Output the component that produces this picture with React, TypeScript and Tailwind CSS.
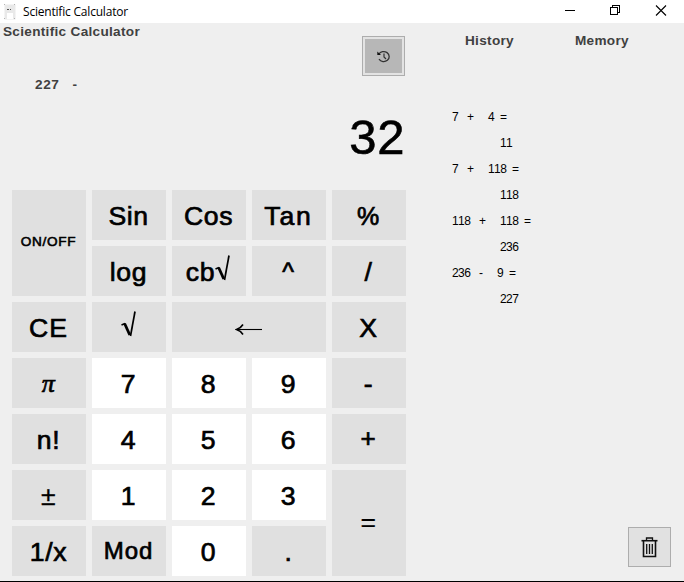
import React from "react";

type Key = { label: string; box?: string; text?: string; light?: boolean };

const keys: Key[] = [
  { label: "ON/OFF", box: "row-span-2", text: "-mt-1 text-[13.6px] tracking-[0.7px] [-webkit-text-stroke:0.6px_#000]" },
  { label: "Sin" },
  { label: "Cos" },
  { label: "Tan", text: "tracking-[1.8px]" },
  { label: "%", text: "text-[25px]" },
  { label: "log" },
  { label: "cb√" },
  { label: "^", text: "text-[25px]" },
  { label: "/" },
  { label: "CE", text: "tracking-[1px]" },
  { label: "√" },
  { label: "←", box: "col-span-2" },
  { label: "X" },
  { label: "π", text: "text-[26px] font-['Liberation_Serif',serif] italic" },
  { label: "7", light: true },
  { label: "8", light: true },
  { label: "9", light: true },
  { label: "-" },
  { label: "n!" },
  { label: "4", light: true },
  { label: "5", light: true },
  { label: "6", light: true },
  { label: "+", text: "text-[26px] -mt-1" },
  { label: "±", text: "[-webkit-text-stroke:0.3px_#000]" },
  { label: "1", light: true },
  { label: "2", light: true },
  { label: "3", light: true },
  { label: "=", box: "row-span-2", text: "-mt-1 [-webkit-text-stroke:0.2px_#000]" },
  { label: "1/x" },
  { label: "Mod", text: "text-[24px] tracking-[1px] -mt-0.5" },
  { label: "0", light: true },
  { label: "." },
];

function Face({ label, text }: Key) {
  if (label === "←")
    return (
      <svg width="28" height="12" viewBox="0 0 28 12" className="mt-0.5" fill="none" stroke="#000">
        <path d="M2 6.5H27" strokeWidth="1.1" />
        <path d="M8 1.5C6.5 4 4.5 5.5 1.5 6.5C4.5 7.5 6.5 9 8 11.5" strokeWidth="1.6" />
      </svg>
    );
  if (label === "√") return <Root />;
  if (label === "cb√")
    return (
      <span className="-ml-px flex items-center">
        <span>cb</span>
        <Root />
      </span>
    );
  return <span className={text ?? ""}>{label}</span>;
}

function Root() {
  return (
    <svg width="15" height="26" viewBox="0 0 15 26" className="-mt-2" fill="none" stroke="#000">
      <path d="M0.5 14L4 12.5" strokeWidth="1.6" />
      <path d="M3.6 12.5L8.8 24" strokeWidth="2.8" />
      <path d="M9.5 25L14 0.5" strokeWidth="1.7" />
    </svg>
  );
}

type Token = [string, string];
const history: { tokens: Token[]; result: string }[] = [
  { tokens: [["7", "w-[15px]"], ["+", "w-[21px]"], ["4", "w-3"], ["=", ""]], result: "11" },
  { tokens: [["7", "w-[15px]"], ["+", "w-[21px]"], ["118", "w-6"], ["=", ""]], result: "118" },
  { tokens: [["118", "w-[27px]"], ["+", "w-[21px]"], ["118", "w-6"], ["=", ""]], result: "236" },
  { tokens: [["236", "w-[27px]"], ["-", "w-[18px]"], ["9", "w-3"], ["=", ""]], result: "227" },
];

export default function App() {
  return (
    <div className="flex h-[582px] w-[684px] flex-col overflow-hidden border-b border-black bg-[#efefef] font-['Liberation_Sans',Arial,sans-serif] text-black">
      <header className="flex h-[23px] shrink-0 items-center bg-white pl-1">
        <svg width="12" height="16" viewBox="0 0 12 16" className="shrink-0">
          <path d="M0.5 0.5H11.5V15.5H0.5z" fill="#e9e9e9" />
          <path d="M0 0h1v1H0zM10 0h1v1h-1zM0 14h1v1H0zM10 14h1v1h-1z" fill="#b5b5b5" />
          <path d="M3 5.5h2M6 5.5h1" stroke="#555" />
          <path d="M3 15V9h6v6z" fill="#fff" />
        </svg>
        <span className="ml-[7px] font-['Open_Sans',sans-serif] text-[12px] tracking-[-0.2px]">Scientific Calculator</span>
        <svg width="108" height="14" viewBox="0 0 108 14" className="mr-3 mb-1 ml-auto" fill="none" stroke="#000">
          <path d="M1 7.5h10" shapeRendering="crispEdges" />
          <path d="M46.5 4.5h7v7h-7zM48.5 4V2.5h7v7H54" shapeRendering="crispEdges" />
          <path d="M92 2.5L102 12.5M102 2.5L92 12.5" strokeWidth="1.1" />
        </svg>
      </header>
      <div className="flex min-h-0 flex-1">
        <main className="flex w-[406px] flex-col">
          <div className="flex h-[167px] justify-between">
            <div className="pl-[3px] text-[13.6px] font-bold text-[#404040]">
              <h1 className="leading-[17px] tracking-[0.3px]">Scientific Calculator</h1>
              <p className="mt-9 ml-8 leading-[18px] tracking-[0.6px] whitespace-pre">{"227   -"}</p>
            </div>
            <div className="flex flex-col items-end">
              <button className="mt-[13px] mr-px flex h-10 w-[43px] items-center justify-center border border-[#adadad] bg-[#e3e3e3] p-0.5">
                <span className="flex size-full items-center justify-center bg-[#b7b7b7]">
                  <svg width="14" height="13" viewBox="0 0 14 13" className="ml-px" fill="none" stroke="#333">
                    <path d="M1.8 4.3A5.5 5 0 1 1 2 9.2" strokeWidth="1.3" />
                    <path d="M0.3 1.5V5H4z" fill="#111" stroke="none" />
                    <path d="M7 3.5V7L9 9" strokeWidth="1.2" />
                  </svg>
                </span>
              </button>
              <output className="mt-[34px] mr-px text-[49px] leading-[54px] tracking-[0.6px] [-webkit-text-stroke:0.6px_#000]">32</output>
            </div>
          </div>
          <div className="grid grid-cols-[repeat(5,74px)] grid-rows-[repeat(7,50px)] gap-1.5 pl-3 text-[26.6px] leading-none tracking-[0.6px] [-webkit-text-stroke:0.7px_#000]">
            {keys.map((k) => (
              <button
                key={k.label}
                className={`flex items-center justify-center pt-0.5 pr-px ${k.light ? "bg-white" : "bg-[#e0e0e0]"} ${k.box ?? ""}`}
              >
                <Face {...k} />
              </button>
            ))}
          </div>
        </main>
        <aside className="flex flex-1 flex-col">
          <nav className="flex gap-[61px] pt-[9px] pl-[59px] text-[13.6px] leading-[18px] font-bold tracking-[0.3px] text-[#404040]">
            <span>History</span>
            <span>Memory</span>
          </nav>
          <div className="mt-[54px] pl-[46px] text-[12px] leading-[26px] tracking-[-0.6px] [font-kerning:none]">
            {history.map((h) => (
              <div key={h.result}>
                <div className="flex">
                  {h.tokens.map(([t, w], i) => (
                    <span key={i} className={w}>{t}</span>
                  ))}
                </div>
                <div className="pl-12">{h.result}</div>
              </div>
            ))}
          </div>
          <button className="mt-auto mr-[13px] mb-3.5 ml-auto flex h-10 w-[43px] items-center justify-center border border-[#adadad] bg-[#e1e1e1]">
            <svg width="17" height="21" viewBox="0 0 17 21" className="mt-px" fill="none" stroke="#111">
              <path d="M0.5 3.7H16.5" strokeWidth="1.6" />
              <path d="M5.5 3.5V1H11.5V3.5" strokeWidth="1.3" />
              <path d="M2.5 4V19.5H14.5V4" strokeWidth="1.6" />
              <path d="M5.7 7V17M8.5 7V17M11.3 7V17" strokeWidth="1.3" />
            </svg>
          </button>
        </aside>
      </div>
    </div>
  );
}
